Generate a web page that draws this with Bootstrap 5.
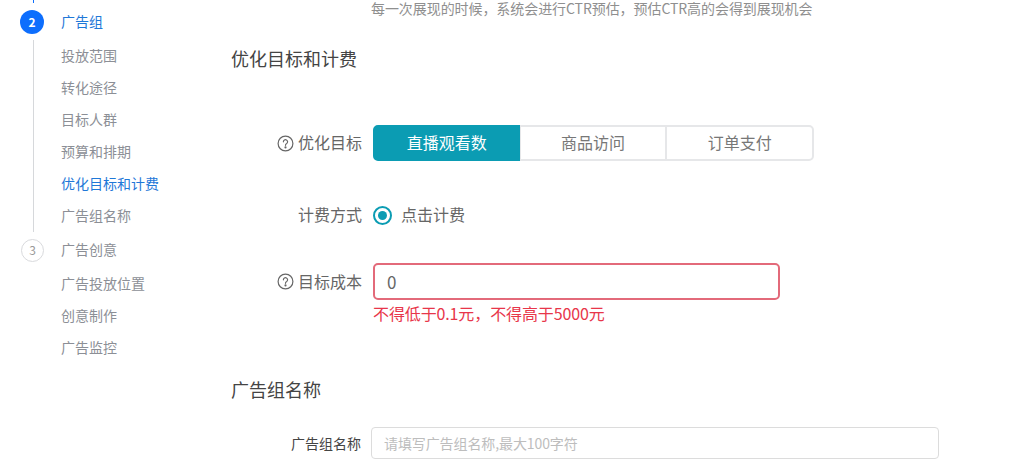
<!DOCTYPE html>
<html lang="zh">
<head>
<meta charset="utf-8">
<title>广告组</title>
<link href="https://cdn.jsdelivr.net/npm/bootstrap@5.3.0/dist/css/bootstrap.min.css" rel="stylesheet">
<style>
html,body{height:471px;overflow:hidden;background:#fff}
body{font-family:"Noto Sans CJK SC","Liberation Sans",sans-serif;color:#666}
.page-wrap{height:471px;overflow:hidden}
.side-col{width:231px;flex:none;font-size:14px;color:#8c8f96}
.top-link{width:1px;height:3px;background:#0d6efd;margin-left:33px;margin-bottom:3px}
.step-row{height:32px;margin-bottom:2px;margin-left:20px}
.step-dot{width:24px;height:24px;border-radius:50%;font-size:12px;flex:none;margin-right:17px}
.step-on{background:#0d6efd;color:#fff;font-weight:700}
.step-off{border:1px solid #d9dadd;color:#999;width:23px;height:23px;margin-left:1px}
.step-label{padding-bottom:2px}
.step-on-text{color:#1f78d8}
.sub-list{margin:0 0 2px 33px;padding-left:27px;border-left:1px solid #d6d8db}
.sub-plain{border-left-color:transparent}
.sub-item{height:32px;line-height:30px}
.sub-active{color:#1f78d8}
.main-col{width:720px;flex:none}
.hint-text{font-size:14px;line-height:16px;color:#8f8f8f;margin-left:140px;letter-spacing:-.07px}
.sec-title{font-size:18px;line-height:26px;color:#444;font-weight:400;margin:0}
.title-one{margin-top:29px}
.title-two{margin-top:53px}
.form-line{display:flex;align-items:center}
.line-one{margin-top:54px}
.line-two{margin-top:42px}
.line-three{margin-top:36px}
.line-four{margin-top:25px}
.field-name{width:131px;flex:none;font-size:16px;line-height:22px;padding-bottom:2px;color:#666;margin-right:11px}
.field-small{font-size:14px;color:#444;width:130px;margin-right:10px;padding-bottom:0}
.help-svg{width:17px;height:17px;margin-right:4px;margin-top:2px;margin-left:1px}
.seg-group{width:441px}
.seg-group .btn{width:147px;height:36px;padding:0 0 2px;font-size:16px;line-height:28px;color:#777;background:#fff;border:2px solid #e6e7e9;border-radius:5px;--bs-btn-border-radius:5px}
.seg-group .btn:not(:first-child){margin-left:-1px;border-left-width:1px}
.seg-group .btn.seg-on{background:#0b9cb3;border-color:#0b9cb3;color:#fff}
.radio-ring{width:19px;height:19px;border:2px solid #0b9cb3;border-radius:50%;flex:none;margin-right:9px;margin-left:0}
.radio-ring i{display:block;width:9px;height:9px;border-radius:50%;background:#0b9cb3}
.radio-text{font-size:16px;line-height:22px;padding-bottom:2px;color:#666}
.cost-input.form-control{width:407px;height:37px;padding:0 12px;font-size:17px;color:#666;border:2px solid #e36a7a;border-radius:5px;box-shadow:none}
.err-text{margin:3px 0 0 142px;font-size:16px;line-height:20px;color:#e8364a;letter-spacing:-.12px}
.name-input.form-control{width:568px;height:32px;padding:0 12px;font-size:14px;border:1px solid #dcdcdc;border-radius:4px;letter-spacing:-.1px}
.name-input.form-control::placeholder{color:#bdbdbd}
</style>
</head>
<body>
<div class="page-wrap d-flex">
  <nav class="side-col">
    <div class="top-link"></div>
    <div class="step-row d-flex align-items-center step-on-text">
      <span class="step-dot step-on d-flex align-items-center justify-content-center">2</span><span class="step-label">广告组</span>
    </div>
    <div class="sub-list">
      <div class="sub-item">投放范围</div>
      <div class="sub-item">转化途径</div>
      <div class="sub-item">目标人群</div>
      <div class="sub-item">预算和排期</div>
      <div class="sub-item sub-active">优化目标和计费</div>
      <div class="sub-item">广告组名称</div>
    </div>
    <div class="step-row d-flex align-items-center">
      <span class="step-dot step-off d-flex align-items-center justify-content-center">3</span><span class="step-label">广告创意</span>
    </div>
    <div class="sub-list sub-plain">
      <div class="sub-item">广告投放位置</div>
      <div class="sub-item">创意制作</div>
      <div class="sub-item">广告监控</div>
    </div>
  </nav>
  <main class="main-col">
    <div class="hint-text">每一次展现的时候，系统会进行CTR预估，预估CTR高的会得到展现机会</div>
    <h2 class="sec-title title-one">优化目标和计费</h2>
    <div class="form-line line-one">
      <div class="field-name d-flex align-items-center justify-content-end">
        <svg class="help-svg" viewBox="0 0 17 17" fill="none" stroke="#666" stroke-width="1.2"><circle cx="8.5" cy="8.5" r="7.4"/><path d="M6.4 6.8a2.1 2.1 0 1 1 3.3 1.7c-.8.5-1.2.9-1.2 1.8" stroke-linecap="round"/><circle cx="8.5" cy="12.4" r=".5" fill="#666"/></svg>优化目标
      </div>
      <div class="btn-group seg-group" role="group">
        <button type="button" class="btn seg-on">直播观看数</button>
        <button type="button" class="btn">商品访问</button>
        <button type="button" class="btn">订单支付</button>
      </div>
    </div>
    <div class="form-line line-two">
      <div class="field-name text-end">计费方式</div>
      <span class="radio-ring d-flex align-items-center justify-content-center"><i></i></span>
      <span class="radio-text">点击计费</span>
    </div>
    <div class="form-line line-three">
      <div class="field-name d-flex align-items-center justify-content-end">
        <svg class="help-svg" viewBox="0 0 17 17" fill="none" stroke="#666" stroke-width="1.2"><circle cx="8.5" cy="8.5" r="7.4"/><path d="M6.4 6.8a2.1 2.1 0 1 1 3.3 1.7c-.8.5-1.2.9-1.2 1.8" stroke-linecap="round"/><circle cx="8.5" cy="12.4" r=".5" fill="#666"/></svg>目标成本
      </div>
      <input class="form-control cost-input" type="text" value="0">
    </div>
    <div class="err-text">不得低于0.1元，不得高于5000元</div>
    <h2 class="sec-title title-two">广告组名称</h2>
    <div class="form-line line-four">
      <div class="field-name field-small text-end">广告组名称</div>
      <input class="form-control name-input" type="text" placeholder="请填写广告组名称,最大100字符">
    </div>
  </main>
</div>
<script src="https://cdn.jsdelivr.net/npm/bootstrap@5.3.0/dist/js/bootstrap.bundle.min.js"></script>
</body>
</html>
